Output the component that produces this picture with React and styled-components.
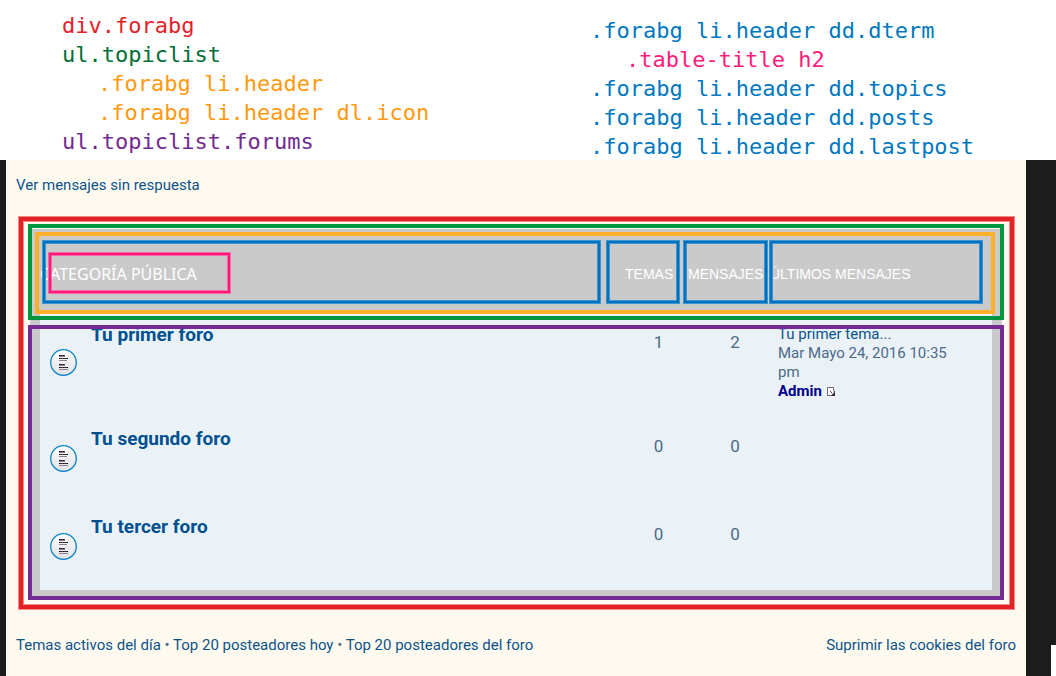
import styled, { createGlobalStyle } from 'styled-components';

const forums = [
  {
    name: 'Tu primer foro',
    topics: 1,
    posts: 2,
    last: { title: 'Tu primer tema...', date: 'Mar Mayo 24, 2016 10:35 pm', author: 'Admin' },
  },
  { name: 'Tu segundo foro', topics: 0, posts: 0 },
  { name: 'Tu tercer foro', topics: 0, posts: 0 },
];

const ForumIcon = () => (
  <svg width="27" height="27" viewBox="0 0 27 27" aria-hidden="true">
    <defs>
      <linearGradient id="disc" x1="0" y1="0" x2="0" y2="1">
        <stop offset="0" stopColor="#fdfdfd" />
        <stop offset="1" stopColor="#e2e2e6" />
      </linearGradient>
    </defs>
    <circle cx="13.5" cy="13.5" r="12.8" fill="url(#disc)" stroke="#0a84c4" strokeWidth="1.3" />
    <g shapeRendering="crispEdges">
      <path d="M9 6h6v1H9zM9 9h9v1H9zM9 15h6v1H9zM9 18h9v1H9z" fill="#3a3036" />
      <path d="M9 7h6v1H9zM9 11h8v1H9zM9 16h6v1H9zM9 20h9v1H9z" fill="#8d808e" />
      <path d="M9 6h1v1H9zM9 9h1v1H9zM9 15h1v1H9zM9 18h1v1H9zM17 9h1v1h-1zM17 18h1v1h-1z" fill="#000" />
    </g>
  </svg>
);

const LastPostIcon = () => (
  <svg width="8" height="9" viewBox="0 0 8 9" aria-hidden="true" shapeRendering="crispEdges">
    <path d="M1 1h5v7H1z" fill="#fff" />
    <path d="M0 0h7v1H0zM0 1h1v8H0zM1 8h3v1H1zM6 1h1v3H6z" fill="#766c7e" />
    <path d="M7 4h1v5H4V8h1V7h1V6h1zM3 4h1v1H3zM4 5h1v1H4z" fill="#3b2f4a" />
  </svg>
);

const App = () => {
  return (
    <Screen>
      <GlobalStyle />
      <Legend>
        <LegendList>
          <LegendItem $color="#e3222a">div.forabg</LegendItem>
          <LegendItem $color="#007038">ul.topiclist</LegendItem>
          <LegendItem $color="#ff9a10" $nested>.forabg li.header</LegendItem>
          <LegendItem $color="#ff9a10" $nested>.forabg li.header dl.icon</LegendItem>
          <LegendItem $color="#722a92">ul.topiclist.forums</LegendItem>
        </LegendList>
        <LegendList $second>
          <LegendItem $color="#0078c0">.forabg li.header dd.dterm</LegendItem>
          <LegendItem $color="#ff1a7c" $nested>.table-title h2</LegendItem>
          <LegendItem $color="#0078c0">.forabg li.header dd.topics</LegendItem>
          <LegendItem $color="#0078c0">.forabg li.header dd.posts</LegendItem>
          <LegendItem $color="#0078c0">.forabg li.header dd.lastpost</LegendItem>
        </LegendList>
      </Legend>
      <Backdrop>
        <Page>
          <LinkBar>
            <a href="#unanswered">Ver mensajes sin respuesta</a>
          </LinkBar>
          <Forabg>
            <TopicTable>
              <Header>
                <HeaderRow>
                  <HeaderCell colSpan={2} $left={2} $right={5}>
                    <TableTitle>CATEGORÍA PÚBLICA</TableTitle>
                  </HeaderCell>
                  <HeaderCell $indent={19} $right={3}>TEMAS</HeaderCell>
                  <HeaderCell $indent={5} $right={1}>MENSAJES</HeaderCell>
                  <HeaderCell $indent={1} $right={9}>ÚLTIMOS MENSAJES</HeaderCell>
                </HeaderRow>
              </Header>
              <Forums>
                {forums.map((forum) => (
                  <ForumRow key={forum.name}>
                    <IconCell><ForumIcon /></IconCell>
                    <TitleCell><a href="#forum">{forum.name}</a></TitleCell>
                    <CountCell $indent={28}>{forum.topics}</CountCell>
                    <CountCell $indent={18}>{forum.posts}</CountCell>
                    <LastPost>
                      {forum.last && (
                        <>
                          <a href="#topic">{forum.last.title}</a>
                          <p>{forum.last.date}</p>
                          <Author href="#admin">{forum.last.author}</Author>
                          <a href="#last" aria-label="Ver último mensaje"><LastPostIcon /></a>
                        </>
                      )}
                    </LastPost>
                  </ForumRow>
                ))}
              </Forums>
            </TopicTable>
          </Forabg>
          <LinkBar>
            <span>
              <a href="#active">Temas activos del día</a> • <a href="#today">Top 20 posteadores hoy</a> • <a href="#top">Top 20 posteadores del foro</a>
            </span>
            <a href="#cookies">Suprimir las cookies del foro</a>
          </LinkBar>
        </Page>
        <Corner />
      </Backdrop>
    </Screen>
  );
};

const GlobalStyle = createGlobalStyle`
  * {
    box-sizing: border-box;
  }

  body {
    margin: 0;
    background: #fff;
    font-family: Roboto, sans-serif;
    font-size: 15px;
    line-height: 20px;
    color: #4c6a88;
  }

  a {
    color: #0c5389;
    text-decoration: none;
  }

  h2, p, ul {
    margin: 0;
    padding: 0;
  }
`;

const Screen = styled.div`
  min-height: 100vh;
  display: flex;
  flex-direction: column;
`;

const Legend = styled.header`
  display: grid;
  grid-template-columns: 528fr 466fr;
  height: 160px;
  padding-left: 62px;
`;

const LegendList = styled.ul`
  list-style: none;
  padding-top: ${({ $second }) => ($second ? 16 : 11)}px;
`;

const LegendItem = styled.li`
  padding-left: ${({ $nested }) => ($nested ? 36 : 0)}px;
  color: ${({ $color }) => $color};
  font-family: 'DejaVu Sans Mono', monospace;
  font-size: 22px;
  line-height: 29px;
  white-space: nowrap;
`;

const Backdrop = styled.div`
  flex: 1;
  display: flex;
  padding-left: 6px;
  background: #1c1c1c;
`;

const Page = styled.main`
  flex: 1;
  padding: 15px 10px;
  background: #fffaef;
`;

const Corner = styled.div`
  align-self: flex-end;
  width: 5px;
  height: 31px;
  margin-left: 25px;
  background: #fff;
`;

const LinkBar = styled.nav`
  display: flex;
  justify-content: space-between;
`;

const Forabg = styled.section`
  position: relative;
  margin: 34px 14px 35px;
  padding: 0 10px 10px;
  background: #cacaca;

  &::after {
    content: '';
    position: absolute;
    inset: -12px -12px -9px -11px;
    border: 4px solid #e32227;
    box-shadow: 0 0 0 1px #f08c88, inset 0 0 0 1px #f08c88;
    pointer-events: none;
  }
`;

const TopicTable = styled.table`
  display: block;

  th, td {
    padding: 0;
    text-align: left;
    font-weight: normal;
  }
`;

const Header = styled.thead`
  display: block;
  position: relative;
  z-index: 1;
  color: #fff;

  &::after {
    content: '';
    position: absolute;
    inset: -5px -12px -10px;
    border: 4px solid #00963f;
    pointer-events: none;
  }
`;

const HeaderRow = styled.tr`
  display: grid;
  grid-template-columns: 1fr 77px 86px 223px;
  position: relative;

  &::after {
    content: '';
    position: absolute;
    inset: 3px -3px -4px -5px;
    border: 4px solid #ffb02a;
    pointer-events: none;
  }
`;

const HeaderCell = styled.th`
  position: relative;
  font-family: 'Liberation Sans', sans-serif;
  font-size: 14px;
  line-height: 24px;
  white-space: nowrap;

  && {
    padding: 33px 0 24px ${({ $indent = 0 }) => $indent}px;
  }

  &::after {
    content: '';
    position: absolute;
    inset: 12px ${({ $right }) => $right + 1}px 7px ${({ $left = 0 }) => $left + 1}px;
    border: 2px solid #0070c0;
    box-shadow: 0 0 0 1px #3a96cc, inset 0 0 0 1px #3a96cc;
    pointer-events: none;
  }
`;

const TableTitle = styled.h2`
  position: relative;
  display: inline-block;
  vertical-align: top;
  font-family: 'Noto Sans', sans-serif;
  font-size: 16px;
  font-weight: normal;
  line-height: 24px;

  &::after {
    content: '';
    position: absolute;
    inset: -9px -33px -7px 9px;
    border: 2px solid #ff1a7c;
    box-shadow: 0 0 0 1px #f76aa6, inset 0 0 0 1px #f76aa6;
  }
`;

const Forums = styled.tbody`
  display: block;
  position: relative;
  background: #eaf2f8;

  &::after {
    content: '';
    position: absolute;
    inset: 15px -12px -10px;
    border: 4px solid #752b94;
    pointer-events: none;
  }
`;

const ForumRow = styled.tr`
  display: grid;
  grid-template-columns: 51px 1fr 77px 86px 223px;
  min-height: 88px;
`;

const IconCell = styled.td`
  align-self: center;

  && {
    padding-left: 10px;
  }

  svg {
    display: block;
  }
`;

const TitleCell = styled.td`
  && {
    padding-top: 15px;
  }

  a {
    color: #00508f;
    font-size: 19px;
    font-weight: bold;
  }
`;

const CountCell = styled.td`
  && {
    padding: 22px 0 0 ${({ $indent }) => $indent}px;
    font-size: 17px;
    text-align: center;
  }
`;

const LastPost = styled.td`
  && {
    padding: 15px 30px 13px 9px;
    line-height: 19px;
  }
`;

const Author = styled.a`
  margin-right: 5px;
  color: #00008b;
  font-weight: bold;
`;

export default App;
